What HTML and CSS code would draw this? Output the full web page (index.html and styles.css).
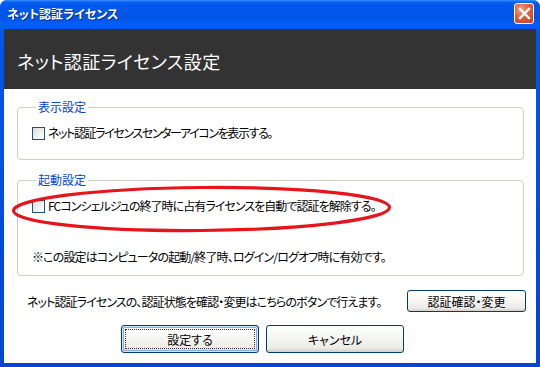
FILE: index.html
```html
<!DOCTYPE html>
<html lang="ja">
<head>
<meta charset="utf-8">
<title>ネット認証ライセンス</title>
<link rel="stylesheet" href="styles.css">
</head>
<body>
<div class="window">
  <div class="titlebar">
    <span class="title">ネット認証ライセンス</span>
    <span class="close" aria-label="閉じる">
      <svg width="13" height="13" viewBox="0 0 13 13"><path d="M2 2 L11 11 M11 2 L2 11" stroke="#fff" stroke-width="2.4" stroke-linecap="square"/></svg>
    </span>
  </div>
  <div class="header">ネット認証ライセンス設定</div>
  <div class="body">
    <fieldset class="group g1">
      <legend>表示設定</legend>
      <label class="row tight"><span class="check"></span>ネット認証ライセンスセンターアイコンを表示する。</label>
    </fieldset>
    <fieldset class="group g2">
      <legend>起動設定</legend>
      <label class="row"><span class="check"></span>FCコンシェルジュの終了時に占有ライセンスを自動で認証を解除する。</label>
      <p class="note">※この設定はコンピュータの起動/終了時、ログイン/ログオフ時に有効です。</p>
    </fieldset>
    <div class="confirm-row">
      <span class="confirm-text">ネット認証ライセンスの、認証状態を確認・変更はこちらのボタンで行えます。</span>
      <button class="btn small">認証確認・変更</button>
    </div>
    <div class="actions">
      <button class="btn big default"><span class="focus">設定する</span></button>
      <button class="btn big">キャンセル</button>
    </div>
    <svg class="ellipse" width="390" height="52" viewBox="0 0 390 52">
      <ellipse cx="190.5" cy="24" rx="188" ry="21.5" fill="none" stroke="#e8141b" stroke-width="3.2" transform="rotate(-0.5 190.5 24)"/>
    </svg>
  </div>
</div>
</body>
</html>
```
FILE: styles.css
```css
* { box-sizing: border-box; }
html, body { margin: 0; padding: 0; }
body {
  width: 540px;
  height: 367px;
  overflow: hidden;
  font-family: "Noto Sans CJK JP", "Liberation Sans", sans-serif;
  font-size: 12px;
  color: #000;
  background: #fff;
}
.window {
  width: 540px;
  height: 367px;
  display: flex;
  flex-direction: column;
  background: linear-gradient(#0058ee, #0046d0);
  border-radius: 7px 7px 0 0;
  overflow: hidden;
}
.titlebar {
  height: 29px;
  flex: none;
  display: flex;
  align-items: center;
  padding: 0 6px 2px 7px;
  background: linear-gradient(#3a8cff 0%, #0a5ff0 8%, #0058ee 20%, #0054e3 60%, #0060f8 85%, #0157ee 100%);
}
.title {
  color: #fff;
  font-weight: bold;
  font-size: 12px;
  letter-spacing: 0;
  font-feature-settings: "palt";
  text-shadow: 1px 1px 0 #0a2a8a;
}
.close {
  margin-left: auto;
  width: 20px;
  height: 21px;
  border: 1px solid #fff;
  border-radius: 3px;
  background: radial-gradient(circle at 35% 30%, #f0a087 0%, #e2603c 45%, #c4381b 100%);
  display: flex;
  align-items: center;
  justify-content: center;
}
.header {
  flex: none;
  height: 60px;
  margin: 0 4px;
  background: #333333;
  color: #fff;
  font-size: 18px;
  letter-spacing: 0.5px;
  font-feature-settings: "palt";
  padding: 20px 0 0 13px;
  line-height: 24px;
}
.body {
  position: relative;
  flex: 1;
  margin: 0 4px 4px;
  background: #fff;
  padding: 11px 12px 9px 13px;
  display: flex;
  flex-direction: column;
}
.group {
  margin: 0;
  border: 1px solid #d0d0bf;
  border-radius: 4px;
  padding: 0 10px 0 14px;
  min-width: 0;
}
.group legend {
  color: #0046d5;
  padding: 0 2px;
  margin-left: 4px;
  line-height: 14px;
  font-size: 12px;
  font-feature-settings: "palt";
}
.g1 { padding-top: 11px; padding-bottom: 18px; }
.g2 { margin-top: 13px; padding-top: 11px; padding-bottom: 10px; }
.row {
  display: flex;
  align-items: center;
  height: 16px;
  line-height: 16px;
  font-feature-settings: "palt";
  letter-spacing: -0.95px;
  white-space: nowrap;
}
.row.tight { letter-spacing: -1.4px; }
.check {
  width: 13px;
  height: 13px;
  flex: none;
  border: 1px solid #1c5180;
  background: linear-gradient(135deg, #dcdcd7 0%, #f3f3ef 60%, #ffffff 100%);
  margin-right: 3px;
}
.note {
  margin: 35px 0 0;
  height: 16px;
  line-height: 16px;
  font-feature-settings: "palt";
  letter-spacing: -0.85px;
  white-space: nowrap;
}
.confirm-row {
  margin-top: 14px;
  display: flex;
  align-items: center;
  padding-left: 10px;
  margin-right: -2px;
}
.confirm-text {
  font-feature-settings: "palt";
  letter-spacing: -0.9px;
  white-space: nowrap;
}
.btn {
  font-family: inherit;
  font-size: 12px;
  color: #000;
  border: 1px solid #003c74;
  border-radius: 3px;
  background: linear-gradient(#ffffff 0%, #f7f7f4 40%, #ecebe6 85%, #d6d0c5 100%);
  padding: 0;
  font-feature-settings: "palt";
}
.small {
  margin-left: auto;
  width: 119px;
  height: 22px;
}
.actions {
  margin-top: 13px;
  display: flex;
  justify-content: center;
  gap: 7px;
  padding-right: 16px;
}
.big {
  width: 138px;
  height: 28px;
}
.default {
  box-shadow: inset 0 0 0 1px #cee7ff, inset 0 0 0 2px #89adf1;
  padding: 3px;
}
.focus {
  display: flex;
  height: 100%;
  align-items: center;
  justify-content: center;
  outline: 1px dotted #333;
  outline-offset: -1px;
}
.ellipse {
  position: absolute;
  left: 7px;
  top: 96px;
}
```
